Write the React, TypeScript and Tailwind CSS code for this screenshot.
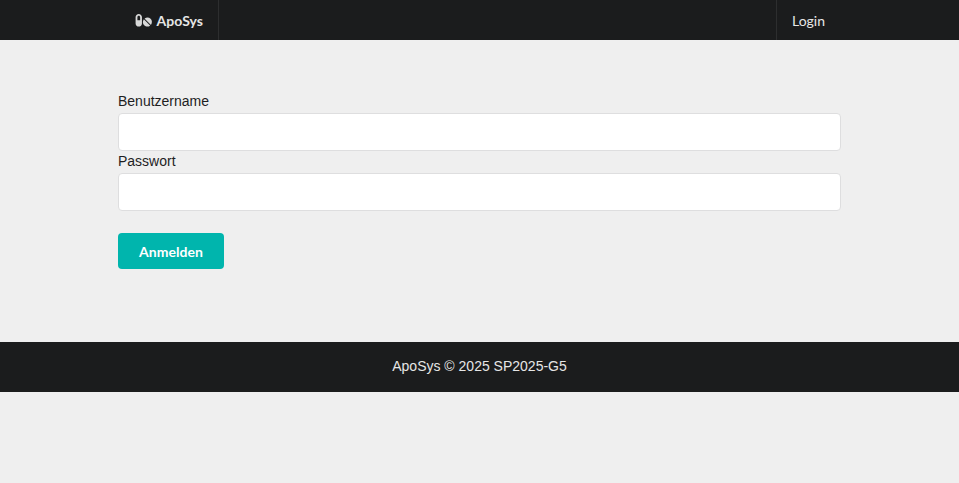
import { FaPills } from "react-icons/fa";

function Field({ label, type }: { label: string; type: string }) {
  return (
    <label className="block">
      <span className="block h-5 leading-5">{label}</span>
      <input type={type} className="mt-0.5 block h-[38px] w-full rounded border border-[#dededf] bg-white px-3.5 outline-none" />
    </label>
  );
}

export default function App() {
  return (
    <div className="min-h-screen bg-[#efefef] font-['Liberation_Sans',Arial,sans-serif] text-[14px] leading-5 text-[#1e1e1f]">
      <nav className="h-10 bg-[#1b1c1d] font-[Lato,sans-serif] text-[#e6e6e6]">
        <div className="mx-auto flex h-full w-[723px] justify-between">
          <a className="flex items-center border-r border-[#2d2e2f] pt-px pr-[15px] pl-[17px] font-bold">
            <FaPills className="mr-1 h-[14.5px] w-[17.5px] text-[#d8d8d8]" />
            <span className="tracking-[0.05px]">ApoSys</span>
          </a>
          <a className="flex items-center border-l border-[#2d2e2f] pt-px pr-4 pl-[15px]">Login</a>
        </div>
      </nav>
      <main className="mx-auto h-[302px] w-[723px] pt-[51px]">
        <form>
          <Field label="Benutzername" type="text" />
          <Field label="Passwort" type="password" />
          <button type="button" className="mt-[22px] block h-9 w-[106px] rounded bg-[#00b5ad] pt-px font-[Lato,sans-serif] font-bold tracking-[0.05px] text-white">
            Anmelden
          </button>
        </form>
      </main>
      <footer className="h-[50px] bg-[#1b1c1d] pt-[14px] text-center text-[#e6e6e6]">ApoSys © 2025 SP2025-G5</footer>
    </div>
  );
}
